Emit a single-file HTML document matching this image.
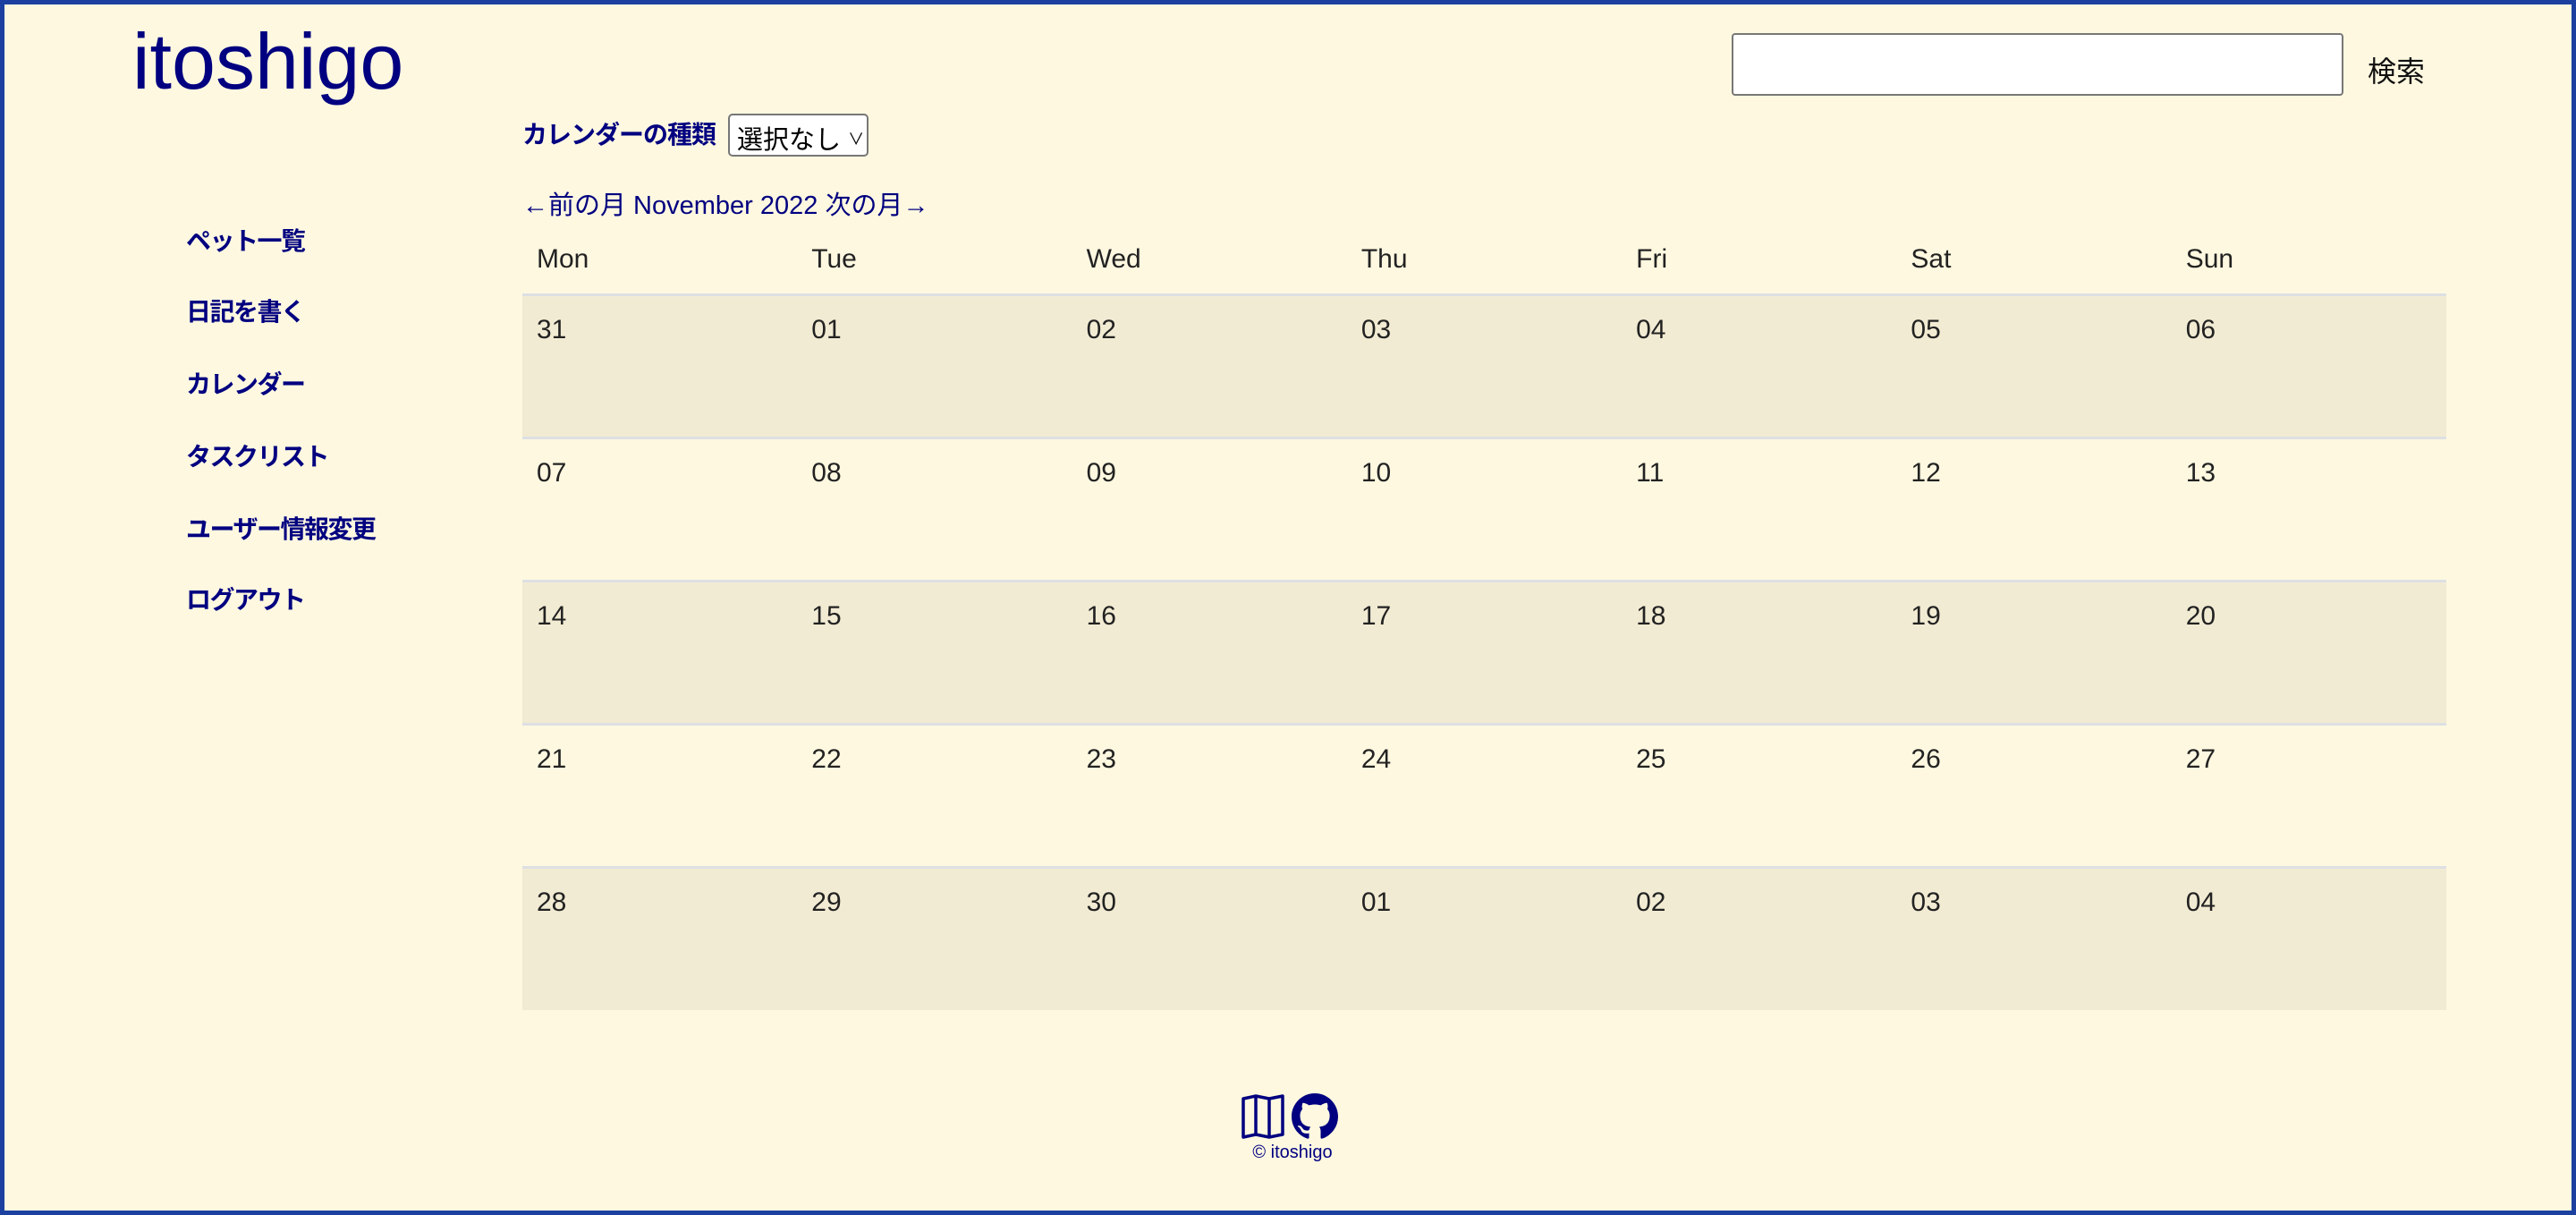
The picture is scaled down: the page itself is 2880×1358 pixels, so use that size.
<!DOCTYPE html>
<html><head><meta charset="utf-8"><style>
*{margin:0;padding:0;box-sizing:border-box}
html,body{width:2880px;height:1358px;overflow:hidden}
body{background:#fef8e0;border:5px solid #1c40a0;position:relative;font-family:"Liberation Sans","Noto Sans CJK JP",sans-serif;color:#000080}
.a{position:absolute;white-space:nowrap}
.title{left:143px;top:14px;font-size:88px;line-height:100px;letter-spacing:0px}
.search{left:1931px;top:32px;width:684px;height:70px;background:#fff;border:2px solid #777;border-radius:4px}
.sbtn{left:2642px;top:50px;font-size:32px;color:#111}
.kind{left:579px;top:124px;font-size:28px;font-weight:bold;letter-spacing:-1px}
.sel{left:809px;top:122px;width:157px;height:48px;border:2px solid #777;border-radius:5px;background:#fff;color:#000;font-size:29px;padding:4px 8px}
.nav{left:579px;top:201px;font-size:29px}
.side{left:203px;font-size:28px;font-weight:bold;letter-spacing:-1.5px}
table{position:absolute;left:579px;top:253px;width:2151px;border-collapse:collapse;color:#222;font-size:30px}
th{text-align:left;font-weight:normal;height:71px;padding-left:16px;vertical-align:middle;padding-bottom:5px}
td{height:160px;vertical-align:top;padding:21px 0 0 16px;width:307px;border-top:3px solid #dde0e4}
tr.o td{background:#f2ebd3}
.copy{left:1390px;top:1272px;font-size:20px;width:100px;text-align:center}
</style></head><body>
<div class="a title">itoshigo</div>
<div class="a search"></div>
<div class="a sbtn">検索</div>
<div class="a kind">カレンダーの種類</div>
<div class="a sel">選択なし <span style="font-size:18px;vertical-align:4px">∨</span></div>
<div class="a nav">←前の月 November 2022 次の月→</div>
<div class="a side" style="top:243px">ペット一覧</div>
<div class="a side" style="top:322px">日記を書く</div>
<div class="a side" style="top:403px">カレンダー</div>
<div class="a side" style="top:484px">タスクリスト</div>
<div class="a side" style="top:565px">ユーザー情報変更</div>
<div class="a side" style="top:644px">ログアウト</div>
<table>
<tr><th>Mon</th><th>Tue</th><th>Wed</th><th>Thu</th><th>Fri</th><th>Sat</th><th>Sun</th></tr>
<tr class="o"><td>31</td><td>01</td><td>02</td><td>03</td><td>04</td><td>05</td><td>06</td></tr>
<tr><td>07</td><td>08</td><td>09</td><td>10</td><td>11</td><td>12</td><td>13</td></tr>
<tr class="o"><td>14</td><td>15</td><td>16</td><td>17</td><td>18</td><td>19</td><td>20</td></tr>
<tr><td>21</td><td>22</td><td>23</td><td>24</td><td>25</td><td>26</td><td>27</td></tr>
<tr class="o"><td>28</td><td>29</td><td>30</td><td>01</td><td>02</td><td>03</td><td>04</td></tr>
</table>
<svg class="a" style="left:1382px;top:1217px" width="50" height="52" viewBox="0 0 50 52"><path d="M3 6 L17 3 L32 6 L47 3 L47 46 L32 49 L17 46 L3 49 Z M17 3 V46 M32 6 V49" fill="none" stroke="#000080" stroke-width="3.5" stroke-linejoin="round"/></svg>
<svg class="a" style="left:1439px;top:1217px" width="52" height="52" viewBox="0 0 16 16"><path fill="#000080" d="M8 0C3.580 0 0 3.58 0 8c0 3.54 2.29 6.53 5.47 7.590.4.07.55-.17.55-.38 0-.19-.01-.82-.01-1.49-2.01.37-2.530-.49-2.690-.94-.09-.23-.48-.94-.82-1.13-.28-.15-.68-.52-.01-.53.63-.01 1.08.58 1.23.82.72 1.21 1.87.87 2.33.66.07-.52.28-.87.51-1.07-1.78-.2-3.64-.89-3.64-3.95 0-.87.31-1.59.82-2.15-.08-.2-.36-1.02.08-2.12 0 0 .67-.21 2.2.82.64-.18 1.32-.27 2-.27.68 0 1.36.09 2 .27 1.53-1.04 2.2-.82 2.2-.82.44 1.1.16 1.92.08 2.12.51.56.82 1.27.82 2.15 0 3.07-1.87 3.75-3.65 3.95.29.25.54.73.54 1.48 0 1.07-.01 1.930-.01 2.2 0 .21.15.46.55.38A8.013 8.013 0 0016 8c0-4.42-3.58-8-8-8z"/></svg>
<div class="a copy">© itoshigo</div>
</body></html>
